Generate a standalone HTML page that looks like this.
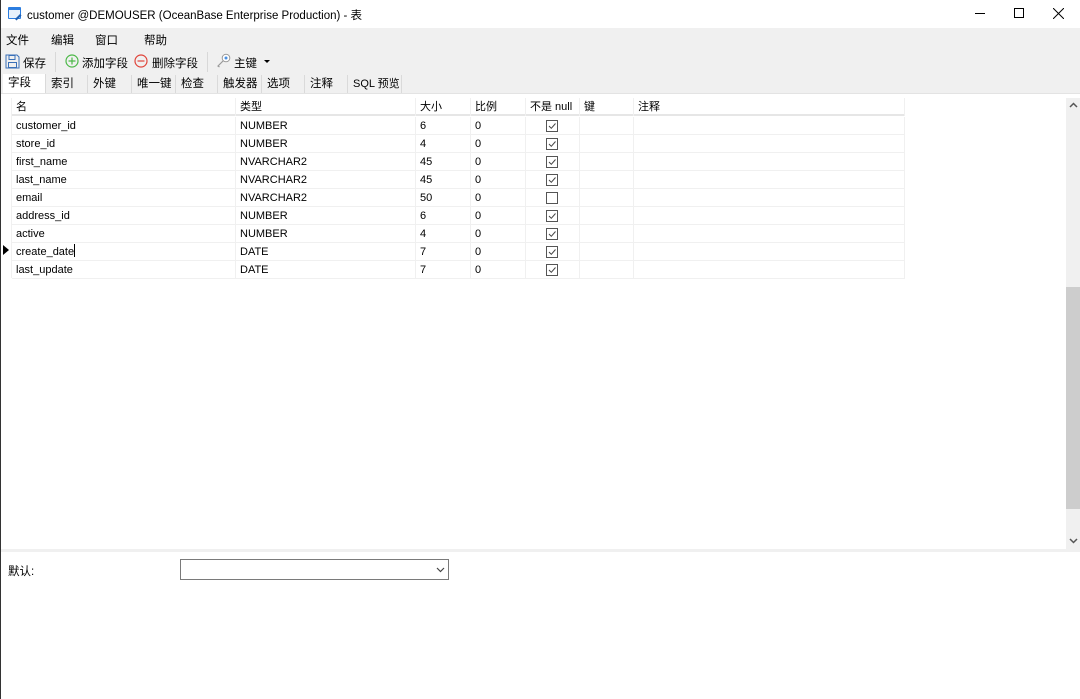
<!DOCTYPE html>
<html><head><meta charset="utf-8"><style>
*{margin:0;padding:0;box-sizing:border-box}
body{width:1080px;height:699px;overflow:hidden;background:#fff;font-family:"Liberation Sans","Noto Sans CJK SC",sans-serif;font-size:11px;color:#000;position:relative}
.a{position:absolute;white-space:nowrap}
.tab{position:absolute;top:75px;height:19px;background:#f0f0f0;border-right:1px solid #dadada;font-size:11.5px;line-height:19px;padding-left:5px;white-space:nowrap;overflow:hidden}
.row{position:absolute;left:12px;width:893px;height:18px;border-bottom:1px solid #f0f0f0}
.cell{position:absolute;top:0;height:18px;line-height:18px;padding-left:4px;border-right:1px solid #f0f0f0;font-size:11px;white-space:nowrap}
.cb{position:absolute;left:20px;top:3px;width:12px;height:12px;border:1px solid #555;background:#fff}
</style></head><body>
<div class="a" style="left:0;top:0;width:1px;height:699px;background:#333"></div>
<svg class="a" style="left:7px;top:6px" width="16" height="16"><rect x="1" y="1" width="13" height="12" rx="1" fill="#2b7de0"/><rect x="2" y="4" width="11" height="8" fill="#e8f1fb"/><path d="M8 13 L13 8 L14.5 9.5 L9.5 14.5 Z" fill="#1f5fb0"/></svg>
<div class="a" style="left:27px;top:7px;font-size:11.5px">customer @DEMOUSER (OceanBase Enterprise Production) - 表</div>
<div class="a" style="left:975px;top:13px;width:10px;height:1px;background:#000"></div>
<div class="a" style="left:1014px;top:8px;width:10px;height:10px;border:1px solid #000"></div>
<svg class="a" style="left:1053px;top:8px" width="11" height="11"><path d="M0 0L11 11M11 0L0 11" stroke="#000" stroke-width="1"/></svg>
<div class="a" style="left:1px;top:28px;width:1079px;height:66px;background:#f0f0f0"></div>
<div class="a" style="left:6px;top:32px;font-size:11.5px">文件</div>
<div class="a" style="left:51px;top:32px;font-size:11.5px">编辑</div>
<div class="a" style="left:95px;top:32px;font-size:11.5px">窗口</div>
<div class="a" style="left:144px;top:32px;font-size:11.5px">帮助</div>
<svg class="a" style="left:5px;top:54px" width="15" height="15"><path d="M1 1H12L14 3V14H1Z" fill="none" stroke="#3a70b8"/><rect x="4" y="1.5" width="6" height="4" fill="none" stroke="#3a70b8"/><rect x="3.5" y="8.5" width="8" height="5" fill="none" stroke="#3a70b8"/></svg>
<div class="a" style="left:23px;top:55px;font-size:11.5px">保存</div>
<div class="a" style="left:55px;top:52px;width:1px;height:20px;background:#d8d8d8"></div>
<svg class="a" style="left:65px;top:54px" width="14" height="14"><circle cx="7" cy="7" r="6" fill="none" stroke="#4cb848" stroke-width="1.2"/><path d="M7 3.5V10.5M3.5 7H10.5" stroke="#4cb848" stroke-width="1.2"/></svg>
<div class="a" style="left:82px;top:55px;font-size:11.5px">添加字段</div>
<svg class="a" style="left:134px;top:54px" width="14" height="14"><circle cx="7" cy="7" r="6" fill="none" stroke="#e0443a" stroke-width="1.2"/><path d="M3.5 7H10.5" stroke="#e0443a" stroke-width="1.2"/></svg>
<div class="a" style="left:152px;top:55px;font-size:11.5px">删除字段</div>
<div class="a" style="left:207px;top:52px;width:1px;height:20px;background:#d8d8d8"></div>
<svg class="a" style="left:216px;top:53px" width="15" height="15"><circle cx="10" cy="5" r="3.8" fill="#fff" stroke="#999"/><circle cx="10" cy="5" r="1.5" fill="#4a90e2"/><path d="M7.5 7.5L2 13L3.5 14" fill="none" stroke="#999" stroke-width="1.2"/></svg>
<div class="a" style="left:234px;top:55px;font-size:11.5px">主键</div>
<div class="a" style="left:264px;top:60px;border-left:3px solid transparent;border-right:3px solid transparent;border-top:3px solid #000"></div>
<div class="tab" style="left:3px;width:43px;background:#fff;top:74px;height:20px">字段</div>
<div class="tab" style="left:46px;width:42px">索引</div>
<div class="tab" style="left:88px;width:44px">外键</div>
<div class="tab" style="left:132px;width:44px">唯一键</div>
<div class="tab" style="left:176px;width:42px">检查</div>
<div class="tab" style="left:218px;width:44px">触发器</div>
<div class="tab" style="left:262px;width:43px">选项</div>
<div class="tab" style="left:305px;width:43px">注释</div>
<div class="tab" style="left:348px;width:54px;font-size:11px">SQL 预览</div>
<div class="a" style="left:1px;top:93px;width:1079px;height:1px;background:#e3e3e3"></div>
<div class="a" style="left:11px;top:98px;width:1px;height:180px;background:#f0f0f0"></div>
<div class="row" style="top:98px;border-bottom:2px solid #e6e6e6">
<div class="cell" style="left:0;width:224px">名</div><div class="cell" style="left:224px;width:180px">类型</div><div class="cell" style="left:404px;width:55px">大小</div><div class="cell" style="left:459px;width:55px">比例</div><div class="cell" style="left:514px;width:54px">不是 null</div><div class="cell" style="left:568px;width:54px">键</div><div class="cell" style="left:622px;width:271px">注释</div></div>
<div id="rows"></div>
<svg class="a" style="left:3px;top:245px" width="6" height="10"><path d="M0 0L6 5L0 10Z" fill="#000"/></svg>
<div class="a" style="left:74px;top:244px;width:1px;height:13px;background:#000"></div>
<div class="a" style="left:1066px;top:98px;width:14px;height:451px;background:#f0f0f0"></div>
<div class="a" style="left:1066px;top:287px;width:14px;height:222px;background:#cdcdcd"></div>
<svg class="a" style="left:1069px;top:102px" width="9" height="6"><path d="M1 5L4.5 1.5L8 5" fill="none" stroke="#555" stroke-width="1.5"/></svg>
<svg class="a" style="left:1069px;top:538px" width="9" height="6"><path d="M1 1L4.5 4.5L8 1" fill="none" stroke="#555" stroke-width="1.5"/></svg>
<div class="a" style="left:1px;top:549px;width:1079px;height:3px;background:#f0f0f0"></div>
<div class="a" style="left:8px;top:563px;font-size:11.5px">默认:</div>
<div class="a" style="left:180px;top:559px;width:269px;height:21px;border:1px solid #7a7a7a;background:#fff"></div>
<svg class="a" style="left:436px;top:567px" width="9" height="6"><path d="M1 1L4.5 4.5L8 1" fill="none" stroke="#444" stroke-width="1.2"/></svg>
<script>
var d=[["customer_id","NUMBER","6",1],["store_id","NUMBER","4",1],["first_name","NVARCHAR2","45",1],["last_name","NVARCHAR2","45",1],["email","NVARCHAR2","50",0],["address_id","NUMBER","6",1],["active","NUMBER","4",1],["create_date","DATE","7",1],["last_update","DATE","7",1]];
var h="";d.forEach(function(r,i){var t=117+i*18;
h+='<div class="row" style="top:'+t+'px"><div class="cell" style="left:0;width:224px">'+r[0]+'</div><div class="cell" style="left:224px;width:180px">'+r[1]+'</div><div class="cell" style="left:404px;width:55px">'+r[2]+'</div><div class="cell" style="left:459px;width:55px">0</div><div class="cell" style="left:514px;width:54px"><div class="cb">'+(r[3]?'<svg width="10" height="10" style="position:absolute;left:0;top:0"><path d="M2 5L4.3 7.3L8.5 2.5" fill="none" stroke="#444" stroke-width="1"/></svg>':'')+'</div></div><div class="cell" style="left:568px;width:54px"></div><div class="cell" style="left:622px;width:271px"></div></div>';});
document.getElementById("rows").innerHTML=h;
</script>
</body></html>
